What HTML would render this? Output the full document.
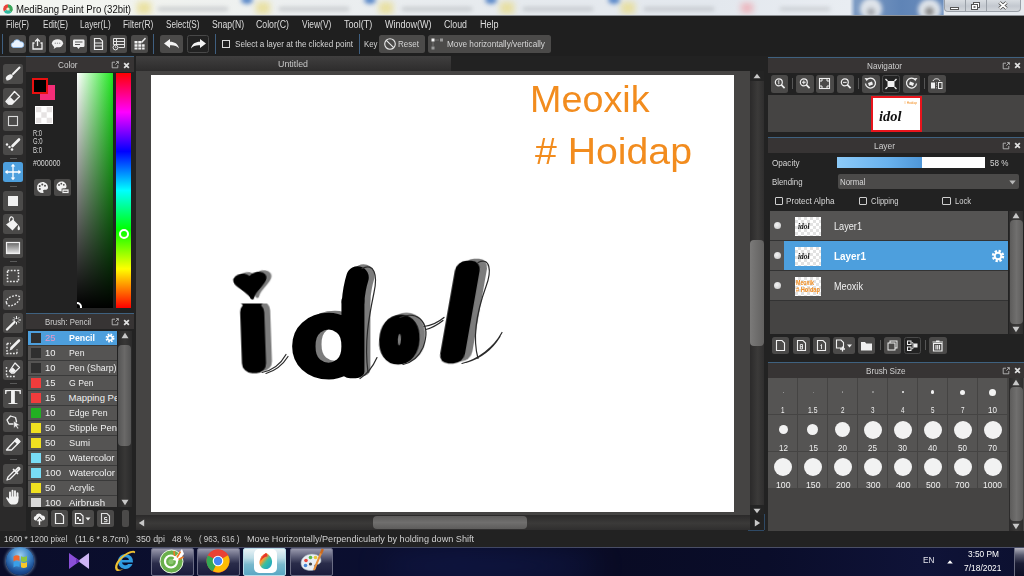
<!DOCTYPE html>
<html><head><meta charset="utf-8"><title>MediBang Paint Pro</title>
<style>
*{box-sizing:border-box;margin:0;padding:0}
html,body{width:1024px;height:576px;overflow:hidden;background:#222;font-family:"Liberation Sans","DejaVu Sans",sans-serif;font-size:9.5px;color:#d6d6d6}
.a{position:absolute}
.t{position:absolute;white-space:pre;display:inline-block;transform-origin:0 50%}
svg{position:absolute;overflow:visible}
#title{left:0;top:0;width:1024px;height:16px;overflow:hidden;background:#eef1f1;color:#111;font-size:10px;line-height:15px}
#menu{left:0;top:16px;width:1024px;height:16px;background:#1f1f1f;font-size:10px;line-height:18.4px;color:#dedede}
#tb{left:0;top:32px;width:1024px;height:24px;background:#1f1f1f;font-size:9.5px;line-height:18px}
.btn{position:absolute;width:17px;height:18px;top:3px;background:#4b4a49;border-radius:2.5px}
.btn.dk{background:#222;border:1px solid #484848}
.vs{position:absolute;width:1px;background:#3f5f80}
#tools{left:0;top:56px;width:26px;height:475px;background:#2b2a2a;box-shadow:inset 0 1px 0 #4a4f55}
.tl{position:absolute;left:3px;width:20px;height:20px;background:#4b4a49;border-radius:2.5px}
.tsep{position:absolute;left:10px;width:7px;height:1px;background:#5a5a5a}
.pn{background:#222}
.hd{position:absolute;left:0;top:0;right:0;height:16px;background:#373434;border-top:1px solid #3f617f;line-height:15px;font-size:9.5px;color:#cfcfcf}
#cv{left:136px;top:56px;width:630px;height:475px;background:#222}
#right{left:768px;top:56px;width:256px;height:475px;background:#454443}
#status{left:0;top:531px;width:1024px;height:16px;background:#222;font-size:9.5px;line-height:16px;color:#cfcfcf}
#task{left:0;top:547px;width:1024px;height:29px;background:#0a0e2a;overflow:hidden}
</style></head><body>
<div class="a" id="title">
 <div class="a" style="left:0;top:0;width:1024px;height:16px;background:linear-gradient(90deg,#f4f6f2 0,#f1f3ef 14%,#eceff0 30%,#e6eaee 50%,#e3e8ee 70%,#e9edf2 83%,#7e9cc4 83.5%,#5f84b6 88%,#6a8dbd 92.1%,#e8ebef 92.2%)"></div>
 <div class="a" style="left:136.5px;top:2px;width:14px;height:12px;background:#e8dc8c;filter:blur(3px);opacity:.8"></div>
 <div class="a" style="left:256px;top:2px;width:14px;height:12px;background:#e8dc8c;filter:blur(3px);opacity:.8"></div>
 <div class="a" style="left:379px;top:2px;width:14px;height:12px;background:#e8dc8c;filter:blur(3px);opacity:.8"></div>
 <div class="a" style="left:500px;top:2px;width:14px;height:12px;background:#e8dc8c;filter:blur(3px);opacity:.8"></div>
 <div class="a" style="left:621px;top:2px;width:14px;height:12px;background:#e8dc8c;filter:blur(3px);opacity:.8"></div>
 <div class="a" style="left:741px;top:3px;width:12px;height:10px;background:#f0a0a8;filter:blur(3px);opacity:.7"></div>
 <div class="a" style="left:158px;top:7px;width:70px;height:4px;background:#b8bcc0;filter:blur(2px);opacity:.7"></div>
 <div class="a" style="left:279px;top:7px;width:70px;height:4px;background:#b8bcc0;filter:blur(2px);opacity:.7"></div>
 <div class="a" style="left:402px;top:7px;width:70px;height:4px;background:#b8bcc0;filter:blur(2px);opacity:.7"></div>
 <div class="a" style="left:523px;top:7px;width:70px;height:4px;background:#b8bcc0;filter:blur(2px);opacity:.7"></div>
 <div class="a" style="left:644px;top:7px;width:70px;height:4px;background:#b8bcc0;filter:blur(2px);opacity:.7"></div>
 <div class="a" style="left:780px;top:7px;width:50px;height:4px;background:#b8bcc0;filter:blur(2px);opacity:.6"></div>
 <div class="a" style="left:241px;top:-4px;width:12px;height:8px;border-radius:50%;background:#5a88c8;filter:blur(2px)"></div>
 <div class="a" style="left:364px;top:-4px;width:12px;height:8px;border-radius:50%;background:#5a88c8;filter:blur(2px)"></div>
 <div class="a" style="left:485px;top:-4px;width:12px;height:8px;border-radius:50%;background:#5a88c8;filter:blur(2px)"></div>
 <div class="a" style="left:608px;top:-4px;width:12px;height:8px;border-radius:50%;background:#5a88c8;filter:blur(2px)"></div>
 
 <div class="a" style="left:860px;top:-2px;width:22px;height:22px;border-radius:50%;background:#dfe4ea;filter:blur(2px)"></div>
 <div class="a" style="left:867px;top:8px;width:8px;height:8px;border-radius:50%;background:#a4a8ae;filter:blur(2px)"></div>
 <div class="a" style="left:918px;top:-1px;width:23px;height:22px;border-radius:50%;background:#dfe4ea;filter:blur(2px)"></div>
 <div class="a" style="left:925px;top:7px;width:9px;height:9px;border-radius:50%;background:#8c8c8c;filter:blur(2px)"></div>
 <div class="a" style="left:944px;top:0;width:77px;height:12px;border-radius:0 0 4px 4px;background:linear-gradient(#d9dde2,#c3c8cf 55%,#d3d7dc);border:1px solid #9aa0a8;border-top:0"></div>
 <div class="a" style="left:965px;top:0;width:1px;height:12px;background:#9aa0a8"></div>
 <div class="a" style="left:986px;top:0;width:1px;height:12px;background:#9aa0a8"></div>
 <div class="a" style="left:944px;top:12px;width:80px;height:4px;background:#e6eaef"></div>
 <div class="a" style="left:950px;top:7px;width:9px;height:3px;background:#fff;border:1px solid #555"></div>
 <svg style="left:970px;top:1px" width="12" height="10" viewBox="0 0 12 10"><rect x="3.5" y="1.5" width="6" height="5" fill="#fff" stroke="#555"/><rect x="1.5" y="3.5" width="6" height="5" fill="#fff" stroke="#555"/><rect x="3.5" y="5.2" width="2" height="1.6" fill="#555"/></svg>
 <svg style="left:998px;top:1px" width="10" height="9" viewBox="0 0 10 9"><path d="M1.5 1.5L8.5 7.5M8.5 1.5L1.5 7.5" stroke="#444" stroke-width="3.4"/><path d="M1.5 1.5L8.5 7.5M8.5 1.5L1.5 7.5" stroke="#fff" stroke-width="1.8"/></svg>
 <div class="a" style="left:0;top:15px;width:1024px;height:1px;background:#8f9296"></div>
 <svg style="left:2px;top:3px" width="12" height="12" viewBox="0 0 12 12"><circle cx="6" cy="6" r="5.3" fill="#fff"/><path d="M6 1.2a4.8 4.8 0 0 0-4.2 7.2L6 6z" fill="#e8433a"/><path d="M1.8 8.4A4.8 4.8 0 0 0 9.6 9.2L6 6z" fill="#2fb8a0"/><path d="M9.6 9.2A4.8 4.8 0 0 0 6 1.2L6 6z" fill="#3aa55a"/><circle cx="6" cy="6" r="1.6" fill="#f5e9c8"/></svg>
 <span class="t" style="transform:scaleX(0.958);left:16px;top:2.2px">MediBang Paint Pro (32bit)</span>
</div>

<div class="a" id="menu">
<span class="t" style="transform:scaleX(0.796);left:6.4px">File(F)</span><span class="t" style="transform:scaleX(0.818);left:42.6px">Edit(E)</span><span class="t" style="transform:scaleX(0.824);left:79.7px">Layer(L)</span><span class="t" style="transform:scaleX(0.839);left:123px">Filter(R)</span><span class="t" style="transform:scaleX(0.815);left:165.6px">Select(S)</span><span class="t" style="transform:scaleX(0.859);left:211.5px">Snap(N)</span><span class="t" style="transform:scaleX(0.873);left:256px">Color(C)</span><span class="t" style="transform:scaleX(0.841);left:302px">View(V)</span><span class="t" style="transform:scaleX(0.909);left:344px">Tool(T)</span><span class="t" style="transform:scaleX(0.902);left:384.7px">Window(W)</span><span class="t" style="transform:scaleX(0.880);left:444.2px">Cloud</span><span class="t" style="transform:scaleX(0.904);left:480px">Help</span>
</div>

<div class="a" id="tb">
 <div class="vs" style="left:2px;top:2px;height:20px"></div>
 <div class="btn" style="left:9px"><svg width="17" height="18" viewBox="0 0 17 18"><path d="M4.2 12.5a2.6 2.6 0 0 1 .3-5.1 3.6 3.6 0 0 1 6.8-.6 2.9 2.9 0 0 1 1.3 5.7z" fill="#e9f3ff" stroke="#8fc0f5" stroke-width=".8"/></svg></div>
 <div class="btn" style="left:29.2px"><svg width="17" height="18" viewBox="0 0 17 18"><path d="M5.5 8H4v6h9V8h-1.5" fill="none" stroke="#f0f0f0" stroke-width="1.3"/><path d="M8.5 11V4.5M6.2 6.5L8.5 4l2.3 2.5" fill="none" stroke="#f0f0f0" stroke-width="1.3"/></svg></div>
 <div class="btn" style="left:49.3px"><svg width="17" height="18" viewBox="0 0 17 18"><ellipse cx="8.5" cy="8.3" rx="5.6" ry="4" fill="#f0f0f0"/><path d="M5.5 11l-.8 3 3.3-2.3z" fill="#f0f0f0"/><circle cx="6.3" cy="8.3" r=".7" fill="#999"/><circle cx="8.5" cy="8.3" r=".7" fill="#999"/><circle cx="10.7" cy="8.3" r=".7" fill="#999"/></svg></div>
 <div class="btn" style="left:69.8px"><svg width="17" height="18" viewBox="0 0 17 18"><rect x="3" y="4.5" width="11.5" height="7.5" rx="1.2" fill="#f0f0f0"/><path d="M7 12l1.5 2 1.5-2z" fill="#f0f0f0"/><path d="M5 7h7.5M5 9.5h5" stroke="#555" stroke-width="1.1"/></svg></div>
 <div class="btn" style="left:90.2px"><svg width="17" height="18" viewBox="0 0 17 18"><path d="M4.5 3.5h5.5l2.5 2.5v8.5h-8z" fill="none" stroke="#f0f0f0" stroke-width="1.2"/><path d="M4.5 8h8M4.5 11h8" stroke="#f0f0f0" stroke-width="1.2"/></svg></div>
 <div class="btn" style="left:110.2px"><svg width="17" height="18" viewBox="0 0 17 18"><path d="M3.5 3.5h11v9h-6M3.5 3.5v6M3.5 6.5h11M3.5 9.5h11M6.5 3.5v6" fill="none" stroke="#e4e4e4" stroke-width="1"/><circle cx="5.5" cy="12.5" r="2.4" fill="#4b4a49" stroke="#e4e4e4" stroke-width="1"/><path d="M5.5 11.3v1.3h1" stroke="#e4e4e4" stroke-width=".8" fill="none"/></svg></div>
 <div class="btn" style="left:130.5px"><svg width="17" height="18" viewBox="0 0 17 18"><path d="M3.5 6h3v2.5h-3zM7.3 6h3v2.5h-3zM3.5 9.3h3v2.5h-3zM7.3 9.3h3v2.5h-3zM11.1 9.3h2.5v2.5h-2.5zM3.5 12.6h3v2h-3zM7.3 12.6h3v2h-3zM11.1 12.6h2.5v2h-2.5z" fill="#f0f0f0"/><path d="M10.5 7.5l3.2-3.5" stroke="#f0f0f0" stroke-width="1.5"/><circle cx="14" cy="3.6" r=".9" fill="#ddd"/></svg></div>
 <div class="vs" style="left:153px;top:2px;height:20px"></div>
 <div class="btn" style="left:159.5px;width:23.5px"><svg width="23" height="18" viewBox="0 0 23 18"><path d="M4 8.5l6-4.5v2.8c4.5 0 8 2 9 6.7-2-2.8-5-3.5-9-3.3v2.8z" fill="#f4f4f4"/></svg></div>
 <div class="btn dk" style="left:186.5px;width:22.5px"><svg width="21" height="16" viewBox="0 0 21 16" style="left:0;top:0"><path d="M18 7.5l-6-4.5v2.8c-4.5 0-8 2-9 6.7 2-2.8 5-3.5 9-3.3v2.8z" fill="#f4f4f4"/></svg></div>
 <div class="vs" style="left:214.5px;top:2px;height:20px"></div>
 <div class="a" style="left:222px;top:8px;width:8px;height:8px;border:1px solid #d8d8d8"></div>
 <span class="t" style="transform:scaleX(0.850);left:234.6px;top:3px">Select a layer at the clicked point</span>
 <div class="vs" style="left:359px;top:2px;height:20px"></div>
 <span class="t" style="transform:scaleX(0.824);left:363.6px;top:3px">Key</span>
 <div class="btn" style="left:379px;width:46px"><svg width="46" height="18" viewBox="0 0 46 18"><circle cx="11" cy="9" r="5.3" fill="none" stroke="#e8e8e8" stroke-width="1.1"/><path d="M7.3 5.3l7.4 7.4" stroke="#e8e8e8" stroke-width="1.1"/></svg><span class="t" style="transform:scaleX(0.846);left:19.4px;top:0">Reset</span></div>
 <div class="btn" style="left:428px;width:122.5px"><svg width="20" height="18" viewBox="0 0 20 18"><rect x="3.5" y="3.5" width="3" height="3" fill="#f4f4f4"/><rect x="12" y="3.5" width="3" height="3" fill="#999"/><rect x="3.5" y="11.5" width="3" height="3" fill="#999"/><path d="M7.5 5h4M5 7.5v3.5" stroke="#aaa" stroke-width=".8" stroke-dasharray="1 1"/></svg><span class="t" style="transform:scaleX(0.863);left:19px;top:0">Move horizontally/vertically</span></div>
</div>

<div class="a" id="tools">
 <div class="tl" style="top:8px"><svg width="20" height="20" viewBox="0 0 20 20"><path d="M16.5 3.5L10 10" stroke="#f2f2f2" stroke-width="2" stroke-linecap="round"/><ellipse cx="6.3" cy="13.3" rx="3.8" ry="2.4" transform="rotate(-35 6.3 13.3)" fill="#f2f2f2"/><path d="M3 16.5c1.5-.2 2.5-1 3-2z" fill="#f2f2f2"/></svg></div>
 <div class="tl" style="top:32px"><svg width="20" height="20" viewBox="0 0 20 20"><path d="M11.5 3.5l5 5-7.5 7.5h-3.5l-2.5-2.5z" fill="none" stroke="#f2f2f2" stroke-width="1.4" stroke-linejoin="round"/><path d="M3.5 13.2l4-4 4.3 4.3-3 3h-3z" fill="#f2f2f2"/></svg></div>
 <div class="tl" style="top:55px"><svg width="20" height="20" viewBox="0 0 20 20"><rect x="5.5" y="5.5" width="9" height="9" fill="none" stroke="#dcdcdc" stroke-width="1.1"/></svg></div>
 <div class="tl" style="top:79px"><svg width="20" height="20" viewBox="0 0 20 20"><path d="M16 4.5L9.5 11" stroke="#f2f2f2" stroke-width="2.6" stroke-linecap="round"/><circle cx="4" cy="9.5" r="1.2" fill="#f2f2f2"/><circle cx="6.5" cy="12" r="1.2" fill="#f2f2f2"/><circle cx="9" cy="14.5" r="1.3" fill="#f2f2f2"/></svg></div>
 <div class="tsep" style="top:101.5px"></div>
 <div class="tl" style="top:106px;background:#4d9fdd"><svg width="20" height="20" viewBox="0 0 20 20"><path d="M10 3v14M3 10h14" stroke="#fff" stroke-width="1.3"/><path d="M10 1.8l2.3 2.8h-4.6zM10 18.2l2.3-2.8h-4.6zM1.8 10l2.8-2.3v4.6zM18.2 10l-2.8-2.3v4.6z" fill="#fff"/></svg></div>
 <div class="tsep" style="top:130px"></div>
 <div class="tl" style="top:134.5px"><svg width="20" height="20" viewBox="0 0 20 20"><rect x="5" y="5" width="10" height="10" fill="#f0f0f0"/></svg></div>
 <div class="tl" style="top:158px"><svg width="20" height="20" viewBox="0 0 20 20"><path d="M3 10.5l7-5 5 5-5.5 6z" fill="#f2f2f2"/><path d="M6.5 7.5c-.5-3 1-5 2.5-4.5s1.5 2.5 1 4.5" fill="none" stroke="#f2f2f2" stroke-width="1.2"/><path d="M15.5 11c1 1.5 1.8 3 1.3 4.5-.5 1-1.8 1-2.1 0-.4-1.5.3-3 .8-4.5z" fill="#f2f2f2"/></svg></div>
 <div class="tl" style="top:181.5px"><svg width="20" height="20" viewBox="0 0 20 20"><defs><linearGradient id="tg" x1="0" y1="0" x2="0" y2="1"><stop offset="0" stop-color="#666"/><stop offset="1" stop-color="#e8e8e8"/></linearGradient></defs><rect x="3.5" y="4.5" width="13" height="11" fill="url(#tg)" stroke="#f0f0f0" stroke-width="1.2"/></svg></div>
 <div class="tsep" style="top:205px"></div>
 <div class="tl" style="top:210px"><svg width="20" height="20" viewBox="0 0 20 20"><rect x="4.5" y="4.5" width="11" height="11" fill="none" stroke="#e6e6e6" stroke-width="1.5" stroke-dasharray="1.8 1.4"/></svg></div>
 <div class="tl" style="top:234px"><svg width="20" height="20" viewBox="0 0 20 20"><path d="M3.5 13c-1-3 2-5.5 5-6.5s7-2 8 .5-2.5 6.5-6 8-6 1-7-2z" fill="none" stroke="#e6e6e6" stroke-width="1.4" stroke-dasharray="1.8 1.4"/></svg></div>
 <div class="tl" style="top:257px"><svg width="20" height="20" viewBox="0 0 20 20"><path d="M4 16.5L11.5 9" stroke="#f2f2f2" stroke-width="2.4" stroke-linecap="round"/><path d="M13.5 3v3M13.5 9v2.5M9.5 7h2.5M15.5 7h2.5M10.8 4.3l1.5 1.5M16.2 4.3l-1.5 1.5M16.2 9.7l-1.5-1.5" stroke="#f2f2f2" stroke-width="1"/></svg></div>
 <div class="tl" style="top:280.5px"><svg width="20" height="20" viewBox="0 0 20 20"><path d="M4 6.5v10h10" fill="none" stroke="#e6e6e6" stroke-width="1.4" stroke-dasharray="1.8 1.4"/><path d="M4 6.5h4M14 16.5v-4" fill="none" stroke="#e6e6e6" stroke-width="1.4" stroke-dasharray="1.8 1.4"/><path d="M16 3.5L8.5 11" stroke="#f2f2f2" stroke-width="2.5" stroke-linecap="round"/><path d="M7.8 10.5l-1.3 3 3-1.3z" fill="#f2f2f2"/></svg></div>
 <div class="tl" style="top:304px"><svg width="20" height="20" viewBox="0 0 20 20"><path d="M3.5 7v9.5h9" fill="none" stroke="#e6e6e6" stroke-width="1.4" stroke-dasharray="1.8 1.4"/><path d="M12 3l4.5 4.5-5.5 5.5h-2.5l-2-2z" fill="none" stroke="#f2f2f2" stroke-width="1.3" stroke-linejoin="round"/><path d="M6.8 10.5l3-3 3 3-2 2h-2.3z" fill="#f2f2f2"/></svg></div>
 <div class="tsep" style="top:327px"></div>
 <div class="tl" style="top:332px"><span class="a" style="left:0;top:-3px;width:20px;text-align:center;font:bold 22px/24px 'Liberation Serif',serif;color:#f2f2f2;transform:scaleX(1.12)">T</span></div>
 <div class="tl" style="top:355.5px"><svg width="20" height="20" viewBox="0 0 20 20"><path d="M4 8l3.5-4 5 1.5 1 4-2 2.5h-5.5z" fill="none" stroke="#f0f0f0" stroke-width="1.3" stroke-linejoin="round"/><path d="M10.5 9l6.5 4.2-2.8.5 1.5 2.6-1.3.7-1.5-2.6-2 1.8z" fill="#f2f2f2" stroke="#4b4a49" stroke-width=".6"/></svg></div>
 <div class="tl" style="top:379px"><svg width="20" height="20" viewBox="0 0 20 20"><path d="M14 3.5l3 3-8.5 8.5h-5l2-2.5z" fill="none" stroke="#f2f2f2" stroke-width="1.3" stroke-linejoin="round"/><path d="M11 6l3.5 3.5 2.7-2.7-3.3-3.5z" fill="#f2f2f2"/></svg></div>
 <div class="tsep" style="top:402.5px"></div>
 <div class="tl" style="top:407.5px"><svg width="20" height="20" viewBox="0 0 20 20"><path d="M4 16l1-3 6.5-6.5 2 2L7 15z" fill="none" stroke="#f2f2f2" stroke-width="1.3" stroke-linejoin="round"/><path d="M10.5 5.5l4 4M12.5 6.5l2.3-2.5c1-1 2.5.5 1.5 1.5l-2.5 2.3" stroke="#f2f2f2" stroke-width="1.7" fill="none" stroke-linecap="round"/></svg></div>
 <div class="tl" style="top:430.5px"><svg width="20" height="20" viewBox="0 0 20 20"><path d="M7 10.5V5.5M9.5 10V3.8M12 10V4.3M14.5 11V6.2" stroke="#f2f2f2" stroke-width="1.9" stroke-linecap="round" fill="none"/><path d="M6.050 9.5h9.4v3.5c0 2.5-1.5 4.5-4 4.5h-2c-1.8 0-2.8-.8-3.8-2.3l-2.4-3.6c-.6-1 .7-1.9 1.5-1l1.3 1.5z" fill="#f2f2f2"/></svg></div>
</div>

<div class="a pn" id="color" style="left:26px;top:56px;width:109.5px;height:256px">
 <div class="hd" style="width:107.5px"><span class="t" style="transform:scaleX(0.859);left:32.3px;top:0">Color</span>
  <svg style="left:84.5px;top:4.2px" width="8" height="8" viewBox="0 0 10 10"><path d="M5 1.5H1.5v7h7V5" fill="none" stroke="#c8c8c8" stroke-width="1"/><path d="M5.5 4.5L9 1M6.5 .8h2.7v2.7" fill="none" stroke="#c8c8c8" stroke-width="1"/></svg>
  <svg style="left:97.0px;top:4.7px" width="7" height="7" viewBox="0 0 9 9"><path d="M1.5 1.5l6 6M7.5 1.5l-6 6" stroke="#e0e0e0" stroke-width="2.300"/></svg>
 </div>
 <div class="a" style="left:14px;top:29px;width:14.5px;height:15px;background:#f52d78"></div>
 <div class="a" style="left:6px;top:22px;width:16px;height:15.5px;background:#000;border:2px solid #e81010"></div>
 <div class="a" style="left:9px;top:50px;width:17.5px;height:17.5px;background:#fff"><svg width="18" height="18" viewBox="0 0 18 18"><path d="M1 1h5.3v5.3H1zM11.7 1H17v5.3h-5.3zM6.3 6.3h5.4v5.4H6.3zM1 11.7h5.3V17H1zM11.7 11.7H17V17h-5.3z" fill="#e6e3e3"/></svg></div>
 <span class="t" style="transform:scaleX(0.680);left:7px;top:71.5px;font-size:8.5px">R:0</span>
 <span class="t" style="transform:scaleX(0.693);left:7px;top:80px;font-size:8.5px">G:0</span>
 <span class="t" style="transform:scaleX(0.705);left:7px;top:88.5px;font-size:8.5px">B:0</span>
 <span class="t" style="transform:scaleX(0.831);left:7px;top:102px;font-size:8.5px">#000000</span>
 <div class="a" style="left:7.5px;top:122.5px;width:17px;height:17px;background:#4b4a49;border-radius:2.5px"><svg width="17" height="17" viewBox="0 0 17 17"><path d="M8.5 3a5.5 5.5 0 1 0 0 11c1.3 0 1.3-1 .8-1.6-.6-.8 0-1.7 1-1.7H12c1.3 0 2-1 2-2.2C14 5.3 11.5 3 8.5 3z" fill="#f2f2f2"/><circle cx="5.7" cy="7" r="1" fill="#4b4a49"/><circle cx="8.3" cy="5.5" r="1" fill="#4b4a49"/><circle cx="11" cy="6.8" r="1" fill="#4b4a49"/><circle cx="5.8" cy="10" r="1" fill="#4b4a49"/></svg></div>
 <div class="a" style="left:28px;top:122.5px;width:17px;height:17px;background:#4b4a49;border-radius:2.5px"><svg width="17" height="17" viewBox="0 0 17 17"><path d="M7.5 2.5a5 5 0 1 0 0 10c1.2 0 1.2-.9.7-1.5-.5-.7 0-1.5.9-1.5h1.5c1.2 0 1.9-.9 1.9-2C12.5 4.5 10.3 2.5 7.5 2.5z" fill="#f2f2f2"/><circle cx="5" cy="6" r=".9" fill="#4b4a49"/><circle cx="7.3" cy="4.7" r=".9" fill="#4b4a49"/><circle cx="9.8" cy="5.8" r=".9" fill="#4b4a49"/><rect x="8" y="10" width="7" height="4.5" fill="#f2f2f2" stroke="#4b4a49" stroke-width=".8"/><path d="M9.5 12.3h4" stroke="#4b4a49" stroke-width="1"/></svg></div>
 <div class="a" style="left:51px;top:17px;width:36px;height:234.5px;background:linear-gradient(to bottom,rgba(0,0,0,0),#000),linear-gradient(to right,#fff,#1fe81f)"></div>
 <div class="a" style="left:89.8px;top:17px;width:15.5px;height:234.5px;background:linear-gradient(to bottom,#ff0000 0,#ff00ff 16.67%,#0000ff 33.33%,#00ffff 50%,#00ff00 66.67%,#ffff00 83.33%,#ff0000 100%)"></div>
 <div class="a" style="left:92.5px;top:173px;width:10px;height:10px;border:2.2px solid #fff;border-radius:50%"></div>
 <div class="a" style="left:51px;top:17px;width:36px;height:234.5px;overflow:hidden"><div class="a" style="left:-5px;top:229px;width:10px;height:10px;border:2px solid #fff;border-radius:50%"></div></div>
</div>

<div class="a pn" id="brush" style="left:26px;top:312px;width:109.5px;height:219px">
 <div class="hd" style="top:1px;width:107.5px"><span class="t" style="transform:scaleX(0.822);left:19px;top:0">Brush: Pencil</span>
  <svg style="left:84.5px;top:4.2px" width="8" height="8" viewBox="0 0 10 10"><path d="M5 1.5H1.5v7h7V5" fill="none" stroke="#c8c8c8" stroke-width="1"/><path d="M5.5 4.5L9 1M6.5 .8h2.7v2.7" fill="none" stroke="#c8c8c8" stroke-width="1"/></svg>
  <svg style="left:97.0px;top:4.7px" width="7" height="7" viewBox="0 0 9 9"><path d="M1.5 1.5l6 6M7.5 1.5l-6 6" stroke="#e0e0e0" stroke-width="2.300"/></svg>
 </div>
 <div class="a" style="left:2px;top:18.5px;width:88.5px;height:176px;overflow:hidden;background:#555453;font-size:9.5px;line-height:14px">
  <div class="a" style="left:0;top:0px;width:88.5px;height:15px;background:#4d9fdd;border-bottom:1px solid #3a3a3a">
   <div class="a" style="left:2.5px;top:2.5px;width:10px;height:9.5px;background:#2f2f2f"></div>
   <span class="t" style="transform:scaleX(0.993);left:17px;top:0;color:#e898c8">25</span>
   <span class="t" style="transform:scaleX(0.929);left:40.5px;top:0;font-weight:bold;color:#fff">Pencil</span>
   <svg style="left:76.5px;top:2.5px" width="10" height="10" viewBox="0 0 10 10"><circle cx="5" cy="5" r="3.3" fill="none" stroke="#fff" stroke-width="2.4" stroke-dasharray="1.5 1.1"/><circle cx="5" cy="5" r="2.3" fill="none" stroke="#fff" stroke-width="1.4"/></svg>
  </div>
  <div class="a" style="left:0;top:15px;width:88.5px;height:15px;background:#555453;border-bottom:1px solid #3a3a3a">
   <div class="a" style="left:2.5px;top:2.5px;width:10px;height:9.5px;background:#2f2f2f"></div>
   <span class="t" style="transform:scaleX(0.993);left:17px;top:0;color:#f0f0f0">10</span>
   <span class="t" style="transform:scaleX(0.917);left:40.5px;top:0;color:#f0f0f0">Pen</span>
  </div>
  <div class="a" style="left:0;top:30px;width:88.5px;height:15px;background:#555453;border-bottom:1px solid #3a3a3a">
   <div class="a" style="left:2.5px;top:2.5px;width:10px;height:9.5px;background:#2f2f2f"></div>
   <span class="t" style="transform:scaleX(0.993);left:17px;top:0;color:#f0f0f0">10</span>
   <span class="t" style="transform:scaleX(0.927);left:40.5px;top:0;color:#f0f0f0">Pen (Sharp)</span>
  </div>
  <div class="a" style="left:0;top:45px;width:88.5px;height:15px;background:#555453;border-bottom:1px solid #3a3a3a">
   <div class="a" style="left:2.5px;top:2.5px;width:10px;height:9.5px;background:#f03c3c"></div>
   <span class="t" style="transform:scaleX(0.993);left:17px;top:0;color:#f0f0f0">15</span>
   <span class="t" style="transform:scaleX(0.910);left:40.5px;top:0;color:#f0f0f0">G Pen</span>
  </div>
  <div class="a" style="left:0;top:60px;width:88.5px;height:15px;background:#555453;border-bottom:1px solid #3a3a3a">
   <div class="a" style="left:2.5px;top:2.5px;width:10px;height:9.5px;background:#f03c3c"></div>
   <span class="t" style="transform:scaleX(0.993);left:17px;top:0;color:#f0f0f0">15</span>
   <span class="t" style="transform:scaleX(1.000);left:40.5px;top:0;color:#f0f0f0">Mapping Pen</span>
  </div>
  <div class="a" style="left:0;top:75px;width:88.5px;height:15px;background:#555453;border-bottom:1px solid #3a3a3a">
   <div class="a" style="left:2.5px;top:2.5px;width:10px;height:9.5px;background:#22b022"></div>
   <span class="t" style="transform:scaleX(0.993);left:17px;top:0;color:#f0f0f0">10</span>
   <span class="t" style="transform:scaleX(0.923);left:40.5px;top:0;color:#f0f0f0">Edge Pen</span>
  </div>
  <div class="a" style="left:0;top:90px;width:88.5px;height:15px;background:#555453;border-bottom:1px solid #3a3a3a">
   <div class="a" style="left:2.5px;top:2.5px;width:10px;height:9.5px;background:#f0e020"></div>
   <span class="t" style="transform:scaleX(0.993);left:17px;top:0;color:#f0f0f0">50</span>
   <span class="t" style="transform:scaleX(0.988);left:40.5px;top:0;color:#f0f0f0">Stipple Pen</span>
  </div>
  <div class="a" style="left:0;top:105px;width:88.5px;height:15px;background:#555453;border-bottom:1px solid #3a3a3a">
   <div class="a" style="left:2.5px;top:2.5px;width:10px;height:9.5px;background:#f0e020"></div>
   <span class="t" style="transform:scaleX(0.993);left:17px;top:0;color:#f0f0f0">50</span>
   <span class="t" style="transform:scaleX(0.970);left:40.5px;top:0;color:#f0f0f0">Sumi</span>
  </div>
  <div class="a" style="left:0;top:120px;width:88.5px;height:15px;background:#555453;border-bottom:1px solid #3a3a3a">
   <div class="a" style="left:2.5px;top:2.5px;width:10px;height:9.5px;background:#78dcf5"></div>
   <span class="t" style="transform:scaleX(0.993);left:17px;top:0;color:#f0f0f0">50</span>
   <span class="t" style="transform:scaleX(0.998);left:40.5px;top:0;color:#f0f0f0">Watercolor</span>
  </div>
  <div class="a" style="left:0;top:135px;width:88.5px;height:15px;background:#555453;border-bottom:1px solid #3a3a3a">
   <div class="a" style="left:2.5px;top:2.5px;width:10px;height:9.5px;background:#78dcf5"></div>
   <span class="t" style="transform:scaleX(1.009);left:17px;top:0;color:#f0f0f0">100</span>
   <span class="t" style="transform:scaleX(1.010);left:40.5px;top:0;color:#f0f0f0">Watercolor (Wet)</span>
  </div>
  <div class="a" style="left:0;top:150px;width:88.5px;height:15px;background:#555453;border-bottom:1px solid #3a3a3a">
   <div class="a" style="left:2.5px;top:2.5px;width:10px;height:9.5px;background:#f0e020"></div>
   <span class="t" style="transform:scaleX(0.993);left:17px;top:0;color:#f0f0f0">50</span>
   <span class="t" style="transform:scaleX(0.911);left:40.5px;top:0;color:#f0f0f0">Acrylic</span>
  </div>
  <div class="a" style="left:0;top:165px;width:88.5px;height:15px;background:#555453;border-bottom:1px solid #3a3a3a">
   <div class="a" style="left:2.5px;top:2.5px;width:10px;height:9.5px;background:#d8d8d8"></div>
   <span class="t" style="transform:scaleX(1.009);left:17px;top:0;color:#f0f0f0">100</span>
   <span class="t" style="transform:scaleX(1.018);left:40.5px;top:0;color:#f0f0f0">Airbrush</span>
  </div>
 </div>
 <div class="a" style="left:91.5px;top:18.5px;width:14px;height:176px;background:linear-gradient(90deg,#2a2a2a,#383736 50%,#2a2a2a)"></div>
 <div class="a" style="left:92px;top:33px;width:12.5px;height:101px;border-radius:4px;background:linear-gradient(90deg,#555,#6a6968 50%,#555)"></div>
 <svg style="left:94.5px;top:19.5px" width="8" height="7" viewBox="0 0 8 7"><path d="M4 .8L7.5 6.2H.5z" fill="#c8c8c8"/></svg>
 <svg style="left:94.5px;top:186.5px" width="8" height="7" viewBox="0 0 8 7"><path d="M4 6.2L7.5 .8H.5z" fill="#c8c8c8"/></svg>
 <div class="a" style="left:5px;top:197.5px;width:17px;height:17px;background:#4b4a49;border-radius:2.5px"><svg width="17" height="17" viewBox="0 0 17 17"><path d="M4.5 10.5a2.3 2.3 0 0 1 .2-4.5 3.3 3.3 0 0 1 6.3-.4 2.5 2.5 0 0 1 1 4.9z" fill="#f2f2f2"/><path d="M8.5 14.5V9M6.3 11L8.5 8.5 10.7 11" stroke="#4b4a49" stroke-width="2.6" fill="none"/><path d="M8.5 15V9.5M6.5 11.3L8.5 9l2 2.3" stroke="#f2f2f2" stroke-width="1.4" fill="none"/></svg></div>
 <div class="a" style="left:25px;top:197.5px;width:17px;height:17px;background:#4b4a49;border-radius:2.5px"><svg width="17" height="17" viewBox="0 0 17 17"><path d="M4.5 3.5h5.5l2.5 2.5v7.5h-8z" fill="none" stroke="#f0f0f0" stroke-width="1.2"/></svg></div>
 <div class="a" style="left:45.5px;top:197.5px;width:22px;height:17px;background:#4b4a49;border-radius:2.5px"><svg width="22" height="17" viewBox="0 0 22 17"><path d="M3.5 3.5h5l2.5 2.5v7.5h-7.5z" fill="none" stroke="#f0f0f0" stroke-width="1.2"/><rect x="5" y="7" width="2" height="2" fill="#f0f0f0"/><rect x="7" y="9" width="2" height="2" fill="#f0f0f0"/><path d="M13.5 7.5h5l-2.5 3z" fill="#f0f0f0"/></svg></div>
 <div class="a" style="left:71px;top:197.5px;width:17px;height:17px;background:#4b4a49;border-radius:2.5px"><svg width="17" height="17" viewBox="0 0 17 17"><path d="M4.5 3.5h5.5l2.5 2.5v7.5h-8z" fill="none" stroke="#e0e0e0" stroke-width="1.1"/><path d="M10 7.5H7.5v2H10v2.2H7" fill="none" stroke="#e0e0e0" stroke-width="1"/></svg></div>
 <div class="a" style="left:96px;top:197.5px;width:7px;height:17px;background:#4b4a49;border-radius:2px"></div>
</div>

<div class="a" id="cv" style="left:135.5px;top:56px;width:631px;height:475px;background:#222">
 <div class="a" style="left:0;top:0;width:315.5px;height:15.5px;background:linear-gradient(#403f3f,#2c2b2b)"><span class="t" style="transform:scaleX(0.931);left:142.5px;top:1px;line-height:14px;color:#c8c8c8">Untitled</span></div>
 <div class="a" style="left:0;top:15px;width:614px;height:444px;background:#454443"></div>
 <div class="a" style="left:15.5px;top:18.5px;width:583px;height:437.5px;background:#fff;overflow:hidden">
  <span class="t" style="transform:scaleX(1.048);left:378.5px;top:4.5px;font-size:36px;line-height:42px;color:#f28c1e">Meoxik</span>
  <span class="t" style="transform:scaleX(1.089);left:383.5px;top:56.5px;font-size:36px;line-height:42px;color:#f28c1e"># Hoidap</span>
  <svg style="left:0;top:0" width="583" height="437.5" viewBox="151 74.5 583 437.5"><g font-family="'DejaVu Sans',sans-serif" font-weight="200" fill="#000" stroke="#000" stroke-linejoin="round" stroke-linecap="round"><text transform="translate(241.6,363) skewX(2)" font-size="92" stroke-width="20" style="filter:drop-shadow(6px -2px 0 #7c7c7c)">i</text><rect x="226" y="250" width="62" height="53" fill="#fff" stroke="none"/><g style="filter:drop-shadow(6.5px -1.5px 0 #7c7c7c)"><text transform="translate(291,371) scale(1.35,1)" font-size="92" stroke-width="13">d</text><path d="M353 302q1-14 4.5-25" fill="none" stroke-width="22.5"/></g><text transform="translate(382.2,354.6) skewX(-3) scale(.950,1)" font-size="56.3" stroke-width="17" style="filter:drop-shadow(6px -1.5px 0 #7c7c7c)">o</text><text transform="translate(438,353) skewX(-10)" font-size="108" stroke-width="20" style="filter:drop-shadow(7px -2px 0 #7c7c7c)">l</text><text transform="translate(232.5,297.5) rotate(-7 18 -13) scale(1.3,.920)" font-family="'Liberation Serif',serif" font-weight="bold" font-size="47" stroke-width="2.5" style="filter:drop-shadow(4px -1px 0 #7c7c7c)">♥</text></g><g fill="none" stroke="#2a2a2a" stroke-width="1.2" stroke-linecap="round"><path d="M262 372c10-2 19-9 24-18M266 373c10-3 17-9 22-17"/><path d="M360 378c8-5 13-12 17-21"/><path d="M400 317c18-8 32 6 23 30-4 9-11 15-20 17M424 326c8-1 14-4 20-9M426 329c7-2 12-5 17-9"/><path d="M462 363c16-4 32-16 40-31M466 362c14-4 26-13 34-26"/><path d="M362 268c12-6 16 6 12 24-5 24-10 50-6 80"/><path d="M478 262c12-6 14 8 8 24-8 22-14 50-8 72"/></g></svg>

 </div>
 <div class="a" style="left:614px;top:15px;width:14px;height:444px;background:linear-gradient(90deg,#2b2a2a,#3b3a39 55%,#2f2e2e)"></div>
 <div class="a" style="left:614px;top:184px;width:14px;height:106px;border-radius:4px;background:linear-gradient(90deg,#7b7a79,#6d6c6b 55%,#626160)"></div>
 <div class="a" style="left:614px;top:15px;width:14px;height:9.5px;background:#242424"></div><svg style="left:617px;top:16.5px" width="8" height="6" viewBox="0 0 8 7" preserveAspectRatio="none"><path d="M4 .8L7.5 6.2H.5z" fill="#c8c8c8"/></svg>
 <div class="a" style="left:614px;top:448.5px;width:14px;height:10px;background:#242424"></div><svg style="left:617px;top:451.5px" width="8" height="6" viewBox="0 0 8 7" preserveAspectRatio="none"><path d="M4 6.2L7.5 .8H.5z" fill="#c8c8c8"/></svg>
 <div class="a" style="left:0;top:459px;width:614px;height:14.5px;background:linear-gradient(#2b2a2a,#3b3a39 55%,#2f2e2e)"></div>
 <div class="a" style="left:237.5px;top:459.5px;width:154px;height:13.5px;border-radius:4px;background:linear-gradient(#5d5c5b,#706f6e 50%,#5d5c5b)"></div>
 <svg style="left:2px;top:462.5px" width="7" height="8" viewBox="0 0 7 8"><path d="M.8 4L6.2 .5v7z" fill="#c8c8c8"/></svg>
 <svg style="left:618.5px;top:462.5px" width="7" height="8" viewBox="0 0 7 8"><path d="M6.2 4L.8 .5v7z" fill="#c8c8c8"/></svg>
 <div class="a" style="left:612px;top:473.5px;width:16.5px;height:1px;background:#2f4a66"></div>
 <div class="a" style="left:628px;top:458px;width:1px;height:16px;background:#2f4a66"></div>
</div>

<div class="a" id="right" style="left:768px;top:56px;width:256px;height:475px;background:#222">
 <div class="hd" style="top:.5px"><span class="t" style="transform:scaleX(0.861);left:98.5px;top:0">Navigator</span><svg style="left:233.5px;top:4.2px" width="8" height="8" viewBox="0 0 10 10"><path d="M5 1.5H1.5v7h7V5" fill="none" stroke="#c8c8c8" stroke-width="1"/><path d="M5.5 4.5L9 1M6.5 .8h2.7v2.7" fill="none" stroke="#c8c8c8" stroke-width="1"/></svg><svg style="left:246.0px;top:4.7px" width="7" height="7" viewBox="0 0 9 9"><path d="M1.5 1.5l6 6M7.5 1.5l-6 6" stroke="#e0e0e0" stroke-width="2.300"/></svg></div>
 <div class="a" style="left:0;top:16.5px;width:256px;height:22px;background:#222"></div>
 <div class="a" style="left:2.5px;top:19px;width:17.5px;height:17.5px;border-radius:2.5px;background:#4b4a49"><svg width="17" height="17" viewBox="-1 -.5 18.5 18.5"><circle cx="7.5" cy="7.5" r="3.8" fill="none" stroke="#f0f0f0" stroke-width="1.3"/><path d="M10.3 10.3l3.5 3.5" stroke="#f0f0f0" stroke-width="1.8"/><path d="M7.5 5.5v4M6.7 6.3l.8-.8" stroke="#f0f0f0" stroke-width="1" fill="none"/></svg></div>
 <div class="a" style="left:24px;top:22px;width:1px;height:11px;background:#555"></div>
 <div class="a" style="left:28px;top:19px;width:17.5px;height:17.5px;border-radius:2.5px;background:#4b4a49"><svg width="17" height="17" viewBox="-1 -.5 18.5 18.5"><circle cx="7.5" cy="7.5" r="3.8" fill="none" stroke="#f0f0f0" stroke-width="1.3"/><path d="M10.3 10.3l3.5 3.5" stroke="#f0f0f0" stroke-width="1.8"/><path d="M5.5 7.5h4M7.5 5.5v4" stroke="#f0f0f0" stroke-width="1.1"/></svg></div>
 <div class="a" style="left:48.2px;top:19px;width:17.5px;height:17.5px;border-radius:2.5px;background:#4b4a49"><svg width="17" height="17" viewBox="0 0 17 17"><rect x="3.5" y="3.5" width="10" height="10" fill="none" stroke="#f0f0f0" stroke-width="1.1"/><path d="M5 7V5h2M10 5h2v2M12 10v2h-2M7 12H5v-2" fill="none" stroke="#f0f0f0" stroke-width="1"/></svg></div>
 <div class="a" style="left:68.7px;top:19px;width:17.5px;height:17.5px;border-radius:2.5px;background:#4b4a49"><svg width="17" height="17" viewBox="-1 -.5 18.5 18.5"><circle cx="7.5" cy="7.5" r="3.8" fill="none" stroke="#f0f0f0" stroke-width="1.3"/><path d="M10.3 10.3l3.5 3.5" stroke="#f0f0f0" stroke-width="1.8"/><path d="M5.5 7.5h4" stroke="#f0f0f0" stroke-width="1.1"/></svg></div>
 <div class="a" style="left:89.5px;top:22px;width:1px;height:11px;background:#555"></div>
 <div class="a" style="left:94px;top:19px;width:17.5px;height:17.5px;border-radius:2.5px;background:#4b4a49"><svg width="17" height="17" viewBox="0 0 17 17" ><path d="M4.5 5a5 5 0 1 1-1 3.5" fill="none" stroke="#f0f0f0" stroke-width="1.3"/><path d="M2.5 3l3 .3-.6 3z" fill="#f0f0f0"/><path d="M6 8l4-1.5 1 3-4 1.5z" fill="#f0f0f0"/></svg></div>
 <div class="a" style="left:114.3px;top:19px;width:17.5px;height:17.5px;border-radius:2.5px;background:#222;border:1px solid #4a4a4a"><svg width="16" height="16" viewBox="0 0 16 16" style="left:0;top:0"><rect x="4.5" y="5" width="7" height="6" fill="#f0f0f0"/><path d="M2.5 3l2 2M13.5 3l-2 2M2.5 13l2-2M13.5 13l-2-2" stroke="#f0f0f0" stroke-width="1.3"/></svg></div>
 <div class="a" style="left:134.7px;top:19px;width:17.5px;height:17.5px;border-radius:2.5px;background:#4b4a49"><svg width="17" height="17" viewBox="0 0 17 17" transform="scale(-1,1)" style="transform:scaleX(-1)"><path d="M4.5 5a5 5 0 1 1-1 3.5" fill="none" stroke="#f0f0f0" stroke-width="1.3"/><path d="M2.5 3l3 .3-.6 3z" fill="#f0f0f0"/><path d="M6 8l4-1.5 1 3-4 1.5z" fill="#f0f0f0"/></svg></div>
 <div class="a" style="left:155.5px;top:22px;width:1px;height:11px;background:#555"></div>
 <div class="a" style="left:160px;top:19px;width:17.5px;height:17.5px;border-radius:2.5px;background:#4b4a49"><svg width="17" height="17" viewBox="0 0 17 17"><rect x="3" y="7.5" width="4" height="6" fill="#f0f0f0"/><rect x="10.5" y="7.5" width="3.5" height="6" fill="none" stroke="#f0f0f0" stroke-width="1"/><path d="M8.5 7v7" stroke="#aaa" stroke-width=".8" stroke-dasharray="1.5 1"/><path d="M5 6c1-3 6-3 7 0" fill="none" stroke="#f0f0f0" stroke-width="1"/></svg></div>
 <div class="a" style="left:0;top:38.5px;width:256px;height:37.5px;background:#454443"></div>
 <div class="a" style="left:103px;top:40px;width:51px;height:35.5px;background:#fff;border:2px solid #e8141c;overflow:hidden;line-height:1"><span class="t" style="transform:scaleX(1.033);left:5.5px;top:11px;font:italic bold 14px/16px 'Liberation Serif',serif;color:#111">idol</span><span class="t" style="transform:scaleX(1.082);left:31px;top:2.5px;font-size:3px;line-height:4px;color:#f28c1e"># Hoidap</span></div>
 <div class="hd" style="top:80.5px"><span class="t" style="transform:scaleX(0.884);left:105.5px;top:0">Layer</span><svg style="left:233.5px;top:4.2px" width="8" height="8" viewBox="0 0 10 10"><path d="M5 1.5H1.5v7h7V5" fill="none" stroke="#c8c8c8" stroke-width="1"/><path d="M5.5 4.5L9 1M6.5 .8h2.7v2.7" fill="none" stroke="#c8c8c8" stroke-width="1"/></svg><svg style="left:246.0px;top:4.7px" width="7" height="7" viewBox="0 0 9 9"><path d="M1.5 1.5l6 6M7.5 1.5l-6 6" stroke="#e0e0e0" stroke-width="2.300"/></svg></div>
 <span class="t" style="transform:scaleX(0.854);left:3.7px;top:101px;line-height:12px">Opacity</span>
 <div class="a" style="left:69px;top:100.5px;width:147.5px;height:11px;background:#fff"><div class="a" style="left:0;top:0;width:85px;height:11px;background:linear-gradient(90deg,#8ccaf8,#69b2ee 60%,#4f97d8)"></div></div>
 <span class="t" style="transform:scaleX(0.854);left:222px;top:101px;line-height:12px">58 %</span>
 <span class="t" style="transform:scaleX(0.825);left:3.7px;top:119.5px;line-height:12px">Blending</span>
 <div class="a" style="left:69.5px;top:118px;width:181.5px;height:15px;background:#4b4a49;border-radius:2px"><span class="t" style="transform:scaleX(0.833);left:2.5px;top:1.5px;line-height:12px">Normal</span><svg style="left:171.5px;top:5.5px" width="7" height="5" viewBox="0 0 7 5"><path d="M.3 .5h6.4L3.5 4.5z" fill="#b8b8b8"/></svg></div>
 <div class="a" style="left:6.5px;top:140.5px;width:8.5px;height:8.5px;border:1px solid #cfcfcf;border-radius:1px"></div>
 <span class="t" style="transform:scaleX(0.858);left:18.4px;top:139px;line-height:12px">Protect Alpha</span>
 <div class="a" style="left:90.7px;top:140.5px;width:8.5px;height:8.5px;border:1px solid #cfcfcf;border-radius:1px"></div>
 <span class="t" style="transform:scaleX(0.801);left:102.6px;top:139px;line-height:12px">Clipping</span>
 <div class="a" style="left:174px;top:140.5px;width:8.5px;height:8.5px;border:1px solid #cfcfcf;border-radius:1px"></div>
 <span class="t" style="transform:scaleX(0.797);left:186.5px;top:139px;line-height:12px">Lock</span>
 <div class="a" style="left:1.5px;top:155px;width:238.5px;height:122.5px;background:#454443"></div>
 <div class="a" style="left:1.5px;top:155px;width:238.5px;height:30px;background:#555453;border-bottom:1px solid #333"></div>
 <div class="a" style="left:5.5px;top:166px;width:7px;height:7px;border-radius:50%;background:radial-gradient(circle at 40% 40%,#f4f4f4,#c4c4c4)"></div>
 <div class="a" style="left:27px;top:161px;width:26px;height:18.5px;overflow:hidden;background-color:#fff;background-image:linear-gradient(45deg,#e2e2e2 25%,transparent 25%,transparent 75%,#e2e2e2 75%),linear-gradient(45deg,#e2e2e2 25%,transparent 25%,transparent 75%,#e2e2e2 75%);background-size:6px 6px;background-position:0 0,3px 3px"><span class="t" style="transform:scaleX(0.923);left:3.4px;top:5px;font:italic bold 8px/9px 'Liberation Serif',serif;color:#111">idol</span></div>
 <span class="t" style="transform:scaleX(0.916);left:65.7px;top:164px;font-size:10px;line-height:14px;color:#f0f0f0">Layer1</span>
 <div class="a" style="left:1.5px;top:185px;width:238.5px;height:30px;background:#555453;border-bottom:1px solid #333"></div>
 <div class="a" style="left:16px;top:185px;width:224px;height:29px;background:#4d9fdd"></div>
 <svg style="left:222.5px;top:192.5px" width="14" height="14" viewBox="0 0 14 14"><circle cx="7" cy="7" r="4.6" fill="none" stroke="#fff" stroke-width="3.2" stroke-dasharray="2.1 1.510"/><circle cx="7" cy="7" r="3.3" fill="none" stroke="#fff" stroke-width="2"/></svg>
 <div class="a" style="left:5.5px;top:196px;width:7px;height:7px;border-radius:50%;background:radial-gradient(circle at 40% 40%,#f4f4f4,#c4c4c4)"></div>
 <div class="a" style="left:27px;top:191px;width:26px;height:18.5px;overflow:hidden;background-color:#fff;background-image:linear-gradient(45deg,#e2e2e2 25%,transparent 25%,transparent 75%,#e2e2e2 75%),linear-gradient(45deg,#e2e2e2 25%,transparent 25%,transparent 75%,#e2e2e2 75%);background-size:6px 6px;background-position:0 0,3px 3px"><span class="t" style="transform:scaleX(0.923);left:3.4px;top:5px;font:italic bold 8px/9px 'Liberation Serif',serif;color:#111">idol</span></div>
 <span class="t" style="transform:scaleX(0.992);left:65.7px;top:194px;font-size:10px;line-height:14px;font-weight:bold;color:#fff">Layer1</span>
 <div class="a" style="left:1.5px;top:215px;width:238.5px;height:30px;background:#555453;border-bottom:1px solid #333"></div>
 <div class="a" style="left:5.5px;top:226px;width:7px;height:7px;border-radius:50%;background:radial-gradient(circle at 40% 40%,#f4f4f4,#c4c4c4)"></div>
 <div class="a" style="left:27px;top:221px;width:26px;height:18.5px;overflow:hidden;background-color:#fff;background-image:linear-gradient(45deg,#e2e2e2 25%,transparent 25%,transparent 75%,#e2e2e2 75%),linear-gradient(45deg,#e2e2e2 25%,transparent 25%,transparent 75%,#e2e2e2 75%);background-size:6px 6px;background-position:0 0,3px 3px"><span class="t" style="transform:scaleX(0.758);left:1px;top:1.5px;font-size:7px;line-height:8px;color:#f28c1e;font-weight:bold">Meoxik</span><span class="t" style="transform:scaleX(0.874);left:1px;top:9px;font-size:6.5px;line-height:8px;color:#f28c1e;font-weight:bold"># Hoidap</span></div>
 <span class="t" style="transform:scaleX(0.915);left:65.7px;top:224px;font-size:10px;line-height:14px;color:#f0f0f0">Meoxik</span>
 <div class="a" style="left:241px;top:155px;width:14px;height:122.5px;background:linear-gradient(90deg,#2b2a2a,#3b3a39 55%,#2f2e2e)"></div>
 <div class="a" style="left:241.5px;top:164px;width:13px;height:104px;border-radius:4px;background:linear-gradient(90deg,#5d5c5b,#706f6e 50%,#5d5c5b)"></div>
 <svg style="left:244px;top:155.5px" width="8" height="7" viewBox="0 0 8 7"><path d="M4 .8L7.5 6.2H.5z" fill="#c8c8c8"/></svg>
 <svg style="left:244px;top:270px" width="8" height="7" viewBox="0 0 8 7"><path d="M4 6.2L7.5 .8H.5z" fill="#c8c8c8"/></svg>
 <div class="a" style="left:4.4px;top:280.5px;width:17px;height:17px;border-radius:2.5px;background:#4b4a49"><svg width="17" height="17" viewBox="0 0 17 17"><path d="M4.5 3.5h5.5l2.5 2.5v7.5h-8z" fill="none" stroke="#f0f0f0" stroke-width="1.1"/></svg></div>
 <div class="a" style="left:24.5px;top:280.5px;width:17px;height:17px;border-radius:2.5px;background:#4b4a49"><svg width="17" height="17" viewBox="0 0 17 17"><path d="M4.5 3.5h5.5l2.5 2.5v7.5h-8z" fill="none" stroke="#f0f0f0" stroke-width="1.1"/><path d="M7.3 7.5h2.2v4.5H7.3zM7.3 9.7h2.2" fill="none" stroke="#f0f0f0" stroke-width=".9"/></svg></div>
 <div class="a" style="left:44.6px;top:280.5px;width:17px;height:17px;border-radius:2.5px;background:#4b4a49"><svg width="17" height="17" viewBox="0 0 17 17"><path d="M4.5 3.5h5.5l2.5 2.5v7.5h-8z" fill="none" stroke="#f0f0f0" stroke-width="1.1"/><path d="M7.5 8.5l1-1v4.5" fill="none" stroke="#f0f0f0" stroke-width=".9"/></svg></div>
 <div class="a" style="left:65.2px;top:280.5px;width:22px;height:17px;border-radius:2.5px;background:#4b4a49"><svg width="22" height="17" viewBox="0 0 22 17"><path d="M3.5 3h4.5l2.5 2.5v5.5h-7z" fill="none" stroke="#f0f0f0" stroke-width="1.1"/><path d="M9.5 9.5v5M7 12h5" stroke="#f0f0f0" stroke-width="1.3"/><path d="M14 7.5h5l-2.5 3z" fill="#f0f0f0"/></svg></div>
 <div class="a" style="left:90.3px;top:280.5px;width:17px;height:17px;border-radius:2.5px;background:#4b4a49"><svg width="17" height="17" viewBox="0 0 17 17"><path d="M3 5h4l1.2 1.5H14v7H3z" fill="#f0f0f0"/></svg></div>
 <div class="a" style="left:111.5px;top:284px;width:1px;height:10px;background:#555"></div>
 <div class="a" style="left:116px;top:280.5px;width:17px;height:17px;border-radius:2.5px;background:#4b4a49"><svg width="17" height="17" viewBox="0 0 17 17"><rect x="6" y="4" width="7" height="7" fill="none" stroke="#f0f0f0" stroke-width="1"/><rect x="4" y="6" width="7" height="7" fill="#4b4a49" stroke="#f0f0f0" stroke-width="1"/></svg></div>
 <div class="a" style="left:136px;top:280.5px;width:17px;height:17px;border-radius:2.5px;background:#222;border:1px solid #4a4a4a"><svg width="15" height="15" viewBox="0 0 15 15" style="left:0;top:0"><rect x="2.5" y="3" width="3.5" height="3.5" fill="none" stroke="#f0f0f0" stroke-width="1"/><rect x="2.5" y="9" width="3.5" height="3.5" fill="none" stroke="#f0f0f0" stroke-width="1"/><rect x="8.5" y="5.5" width="4" height="4" fill="#f0f0f0"/><path d="M6.5 4.7h1.5v6h-1.5" fill="none" stroke="#f0f0f0" stroke-width=".8"/></svg></div>
 <div class="a" style="left:156.5px;top:284px;width:1px;height:10px;background:#555"></div>
 <div class="a" style="left:161.2px;top:280.5px;width:17.5px;height:17px;border-radius:2.5px;background:#4b4a49"><svg width="17" height="17" viewBox="0 0 17 17"><path d="M4.5 6.5h8.5v7.5h-8.5z" fill="none" stroke="#f0f0f0" stroke-width="1.2"/><path d="M3.5 5h10.5M7 4h3.5M7 8v4.5M8.7 8v4.5M10.5 8v4.5" stroke="#f0f0f0" stroke-width="1.1"/></svg></div>
 <div class="hd" style="top:305.5px"><span class="t" style="transform:scaleX(0.860);left:98px;top:0">Brush Size</span><svg style="left:233.5px;top:4.2px" width="8" height="8" viewBox="0 0 10 10"><path d="M5 1.5H1.5v7h7V5" fill="none" stroke="#c8c8c8" stroke-width="1"/><path d="M5.5 4.5L9 1M6.5 .8h2.7v2.7" fill="none" stroke="#c8c8c8" stroke-width="1"/></svg><svg style="left:246.0px;top:4.7px" width="7" height="7" viewBox="0 0 9 9"><path d="M1.5 1.5l6 6M7.5 1.5l-6 6" stroke="#e0e0e0" stroke-width="2.300"/></svg></div>
 <div class="a" style="left:0;top:321.5px;width:256px;height:153.5px;background:#454443"></div>
 <div class="a" style="left:0.3px;top:321.8px;width:29px;height:36.2px;background:#555453"></div>
 <div class="a" style="left:14.70px;top:335.70px;width:0.6px;height:0.6px;border-radius:50%;background:#9a9a9a"></div>
 <span class="t" style="transform:scaleX(0.739);left:13.2px;top:348.5px;font-size:8.5px;line-height:10px;color:#f0f0f0">1</span>
 <div class="a" style="left:30.2px;top:321.8px;width:29px;height:36.2px;background:#555453"></div>
 <div class="a" style="left:44.55px;top:335.60px;width:0.8px;height:0.8px;border-radius:50%;background:#9a9a9a"></div>
 <span class="t" style="transform:scaleX(0.803);left:40.2px;top:348.5px;font-size:8.5px;line-height:10px;color:#f0f0f0">1.5</span>
 <div class="a" style="left:60.2px;top:321.8px;width:29px;height:36.2px;background:#555453"></div>
 <div class="a" style="left:74.30px;top:335.40px;width:1.2px;height:1.2px;border-radius:50%;background:#9a9a9a"></div>
 <span class="t" style="transform:scaleX(0.739);left:73.2px;top:348.5px;font-size:8.5px;line-height:10px;color:#f0f0f0">2</span>
 <div class="a" style="left:90.1px;top:321.8px;width:29px;height:36.2px;background:#555453"></div>
 <div class="a" style="left:103.95px;top:335.10px;width:1.8px;height:1.8px;border-radius:50%;background:#9a9a9a"></div>
 <span class="t" style="transform:scaleX(0.739);left:103.1px;top:348.5px;font-size:8.5px;line-height:10px;color:#f0f0f0">3</span>
 <div class="a" style="left:120.1px;top:321.8px;width:29px;height:36.2px;background:#555453"></div>
 <div class="a" style="left:133.50px;top:334.70px;width:2.6px;height:2.6px;border-radius:50%;background:#f2f2f2"></div>
 <span class="t" style="transform:scaleX(0.739);left:133.1px;top:348.5px;font-size:8.5px;line-height:10px;color:#f0f0f0">4</span>
 <div class="a" style="left:150.1px;top:321.8px;width:29px;height:36.2px;background:#555453"></div>
 <div class="a" style="left:163.05px;top:334.30px;width:3.4px;height:3.4px;border-radius:50%;background:#f2f2f2"></div>
 <span class="t" style="transform:scaleX(0.739);left:163.0px;top:348.5px;font-size:8.5px;line-height:10px;color:#f0f0f0">5</span>
 <div class="a" style="left:180.0px;top:321.8px;width:29px;height:36.2px;background:#555453"></div>
 <div class="a" style="left:192.20px;top:333.50px;width:5px;height:5px;border-radius:50%;background:#f2f2f2"></div>
 <span class="t" style="transform:scaleX(0.739);left:192.9px;top:348.5px;font-size:8.5px;line-height:10px;color:#f0f0f0">7</span>
 <div class="a" style="left:210.0px;top:321.8px;width:29px;height:36.2px;background:#555453"></div>
 <div class="a" style="left:221.15px;top:332.50px;width:7px;height:7px;border-radius:50%;background:#f2f2f2"></div>
 <span class="t" style="transform:scaleX(0.950);left:220.2px;top:348.5px;font-size:8.5px;line-height:10px;color:#f0f0f0">10</span>
 <div class="a" style="left:0.3px;top:359.0px;width:29px;height:36.2px;background:#555453"></div>
 <div class="a" style="left:10.50px;top:369.20px;width:9px;height:9px;border-radius:50%;background:#f2f2f2"></div>
 <span class="t" style="transform:scaleX(0.950);left:10.5px;top:386.7px;font-size:8.5px;line-height:10px;color:#f0f0f0">12</span>
 <div class="a" style="left:30.2px;top:359.0px;width:29px;height:36.2px;background:#555453"></div>
 <div class="a" style="left:39.45px;top:368.20px;width:11px;height:11px;border-radius:50%;background:#f2f2f2"></div>
 <span class="t" style="transform:scaleX(0.950);left:40.5px;top:386.7px;font-size:8.5px;line-height:10px;color:#f0f0f0">15</span>
 <div class="a" style="left:60.2px;top:359.0px;width:29px;height:36.2px;background:#555453"></div>
 <div class="a" style="left:67.40px;top:366.20px;width:15px;height:15px;border-radius:50%;background:#f2f2f2"></div>
 <span class="t" style="transform:scaleX(0.950);left:70.4px;top:386.7px;font-size:8.5px;line-height:10px;color:#f0f0f0">20</span>
 <div class="a" style="left:90.1px;top:359.0px;width:29px;height:36.2px;background:#555453"></div>
 <div class="a" style="left:95.85px;top:364.70px;width:18px;height:18px;border-radius:50%;background:#f2f2f2"></div>
 <span class="t" style="transform:scaleX(0.950);left:100.3px;top:386.7px;font-size:8.5px;line-height:10px;color:#f0f0f0">25</span>
 <div class="a" style="left:120.1px;top:359.0px;width:29px;height:36.2px;background:#555453"></div>
 <div class="a" style="left:125.80px;top:364.70px;width:18px;height:18px;border-radius:50%;background:#f2f2f2"></div>
 <span class="t" style="transform:scaleX(0.950);left:130.3px;top:386.7px;font-size:8.5px;line-height:10px;color:#f0f0f0">30</span>
 <div class="a" style="left:150.1px;top:359.0px;width:29px;height:36.2px;background:#555453"></div>
 <div class="a" style="left:155.75px;top:364.70px;width:18px;height:18px;border-radius:50%;background:#f2f2f2"></div>
 <span class="t" style="transform:scaleX(0.950);left:160.2px;top:386.7px;font-size:8.5px;line-height:10px;color:#f0f0f0">40</span>
 <div class="a" style="left:180.0px;top:359.0px;width:29px;height:36.2px;background:#555453"></div>
 <div class="a" style="left:185.70px;top:364.70px;width:18px;height:18px;border-radius:50%;background:#f2f2f2"></div>
 <span class="t" style="transform:scaleX(0.950);left:190.2px;top:386.7px;font-size:8.5px;line-height:10px;color:#f0f0f0">50</span>
 <div class="a" style="left:210.0px;top:359.0px;width:29px;height:36.2px;background:#555453"></div>
 <div class="a" style="left:215.65px;top:364.70px;width:18px;height:18px;border-radius:50%;background:#f2f2f2"></div>
 <span class="t" style="transform:scaleX(0.950);left:220.2px;top:386.7px;font-size:8.5px;line-height:10px;color:#f0f0f0">70</span>
 <div class="a" style="left:0.3px;top:396.2px;width:29px;height:36.2px;background:#555453"></div>
 <div class="a" style="left:6.00px;top:401.90px;width:18px;height:18px;border-radius:50%;background:#f2f2f2"></div>
 <span class="t" style="transform:scaleX(1.022);left:7.8px;top:423.9px;font-size:8.5px;line-height:10px;color:#f0f0f0">100</span>
 <div class="a" style="left:30.2px;top:396.2px;width:29px;height:36.2px;background:#555453"></div>
 <div class="a" style="left:35.95px;top:401.90px;width:18px;height:18px;border-radius:50%;background:#f2f2f2"></div>
 <span class="t" style="transform:scaleX(1.022);left:37.7px;top:423.9px;font-size:8.5px;line-height:10px;color:#f0f0f0">150</span>
 <div class="a" style="left:60.2px;top:396.2px;width:29px;height:36.2px;background:#555453"></div>
 <div class="a" style="left:65.90px;top:401.90px;width:18px;height:18px;border-radius:50%;background:#f2f2f2"></div>
 <span class="t" style="transform:scaleX(1.022);left:67.7px;top:423.9px;font-size:8.5px;line-height:10px;color:#f0f0f0">200</span>
 <div class="a" style="left:90.1px;top:396.2px;width:29px;height:36.2px;background:#555453"></div>
 <div class="a" style="left:95.85px;top:401.90px;width:18px;height:18px;border-radius:50%;background:#f2f2f2"></div>
 <span class="t" style="transform:scaleX(1.022);left:97.6px;top:423.9px;font-size:8.5px;line-height:10px;color:#f0f0f0">300</span>
 <div class="a" style="left:120.1px;top:396.2px;width:29px;height:36.2px;background:#555453"></div>
 <div class="a" style="left:125.80px;top:401.90px;width:18px;height:18px;border-radius:50%;background:#f2f2f2"></div>
 <span class="t" style="transform:scaleX(1.022);left:127.6px;top:423.9px;font-size:8.5px;line-height:10px;color:#f0f0f0">400</span>
 <div class="a" style="left:150.1px;top:396.2px;width:29px;height:36.2px;background:#555453"></div>
 <div class="a" style="left:155.75px;top:401.90px;width:18px;height:18px;border-radius:50%;background:#f2f2f2"></div>
 <span class="t" style="transform:scaleX(1.022);left:157.5px;top:423.9px;font-size:8.5px;line-height:10px;color:#f0f0f0">500</span>
 <div class="a" style="left:180.0px;top:396.2px;width:29px;height:36.2px;background:#555453"></div>
 <div class="a" style="left:185.70px;top:401.90px;width:18px;height:18px;border-radius:50%;background:#f2f2f2"></div>
 <span class="t" style="transform:scaleX(1.022);left:187.4px;top:423.9px;font-size:8.5px;line-height:10px;color:#f0f0f0">700</span>
 <div class="a" style="left:210.0px;top:396.2px;width:29px;height:36.2px;background:#555453"></div>
 <div class="a" style="left:215.65px;top:401.90px;width:18px;height:18px;border-radius:50%;background:#f2f2f2"></div>
 <span class="t" style="transform:scaleX(1.004);left:215.2px;top:423.9px;font-size:8.5px;line-height:10px;color:#f0f0f0">1000</span>
 <div class="a" style="left:241px;top:321.5px;width:14px;height:153.5px;background:linear-gradient(90deg,#2b2a2a,#3b3a39 55%,#2f2e2e)"></div>
 <div class="a" style="left:241.5px;top:331px;width:13px;height:134px;border-radius:4px;background:linear-gradient(90deg,#5d5c5b,#706f6e 50%,#5d5c5b)"></div>
 <svg style="left:244px;top:323px" width="8" height="7" viewBox="0 0 8 7"><path d="M4 .8L7.5 6.2H.5z" fill="#c8c8c8"/></svg>
 <svg style="left:244px;top:466.5px" width="8" height="7" viewBox="0 0 8 7"><path d="M4 6.2L7.5 .8H.5z" fill="#c8c8c8"/></svg>
</div>

<div class="a" id="status">
 <span class="t" style="transform:scaleX(0.865);left:4.2px;top:0">1600 * 1200 pixel</span>
 <span class="t" style="transform:scaleX(0.916);left:75.4px;top:0">(11.6 * 8.7cm)</span>
 <span class="t" style="transform:scaleX(0.930);left:136px;top:0">350 dpi</span>
 <span class="t" style="transform:scaleX(0.900);left:171.5px;top:0">48 %</span>
 <span class="t" style="transform:scaleX(0.833);left:198.5px;top:0">( 963, 616 )</span>
 <span class="t" style="transform:scaleX(0.960);left:246.5px;top:0">Move Horizontally/Perpendicularly by holding down Shift</span>
</div>

<div class="a" id="task">
 <div class="a" style="left:0;top:0;width:1024px;height:29px;background:linear-gradient(90deg,#0a0d2a 0,#0b0f30 25%,#0b0e2e 45%,#090b24 60%,#0a0d2a 75%,#0f1338 90%,#0c1030 100%)"></div>
 <div class="a" style="left:0;top:0;width:1024px;height:1px;background:#4a4e66"></div>
 <div class="a" style="left:380px;top:4px;width:220px;height:30px;border-radius:50%;background:#14205a;filter:blur(14px);opacity:.45"></div>
 <!-- start orb -->
 <div class="a" style="left:6px;top:0px;width:28px;height:28px;border-radius:50%;background:radial-gradient(circle at 50% 30%,#9fd0f0 0,#3f86c8 40%,#1a4a90 70%,#0a2a60 100%);box-shadow:0 0 3px 1px rgba(140,190,240,.6)"></div>
 <svg style="left:11.5px;top:5px" width="17" height="17" viewBox="0 0 17 17"><path d="M1.5 3.5c2-1.2 4-1.2 6 0v5c-2-1.2-4-1.2-6 0z" fill="#f2672e" transform="skewY(-4) translate(0,1)"/><path d="M9 3.2c2 1.2 4 1.2 6 0v5c-2 1.2-4 1.2-6 0z" fill="#8cc63f" transform="skewY(-4) translate(0,1.8)"/><path d="M1.5 9.5c2-1.2 4-1.2 6 0v5c-2-1.2-4-1.2-6 0z" fill="#3aa0e8" transform="skewY(-4) translate(0,1)"/><path d="M9 9.2c2 1.2 4 1.2 6 0v5c-2 1.2-4 1.2-6 0z" fill="#f8c828" transform="skewY(-4) translate(0,1.8)"/></svg>
 <!-- VS icon -->
 <svg style="left:68px;top:5px" width="22" height="18" viewBox="0 0 22 18"><path d="M1 1l11 8L1 17z" fill="#8a4fd8"/><path d="M21 1L10 9l11 8z" fill="#cdb4f5"/><path d="M8 6l4 3-4 3z" fill="#6a30b8"/></svg>
 <!-- IE -->
 <svg style="left:112px;top:2px" width="27" height="25" viewBox="0 0 27 25"><path d="M13.5 5a7.5 7.5 0 1 0 7 10h-4.3a3.6 3.6 0 0 1-6.3-1.5h11.1A7.5 7.5 0 0 0 13.5 5zm-3.5 6a3.6 3.6 0 0 1 7 0z" fill="#2f9ce0"/><path d="M22.5 4.5c2.5-3-2-4-8-.5C7 8 1.5 16 3.5 20.5c1.2 2.5 5 1.5 8-.5-3 1-5.5 1-6-1C4.5 15 10 8.5 15.5 5.5c3.5-2 7-2.5 7-1z" fill="#f0c030"/></svg>
 <!-- task buttons -->
 <div class="a" style="left:150.5px;top:.5px;width:43px;height:28px;border:1px solid #6a6c84;border-radius:2px;background:linear-gradient(#9898ac 0,#5c5e78 30%,#2a2c4a 55%,#1a1c3c 100%)"></div>
 <div class="a" style="left:196.5px;top:.5px;width:43.5px;height:28px;border:1px solid #6a6c84;border-radius:2px;background:linear-gradient(#9898ac 0,#5c5e78 30%,#2a2c4a 55%,#1a1c3c 100%)"></div>
 <div class="a" style="left:243px;top:.5px;width:43px;height:28px;border:1px solid #b8dce8;border-radius:2px;background:linear-gradient(#e8f2f6 0,#bcdce6 35%,#78b8cc 60%,#5aa8c4 100%)"></div>
 <div class="a" style="left:289.5px;top:.5px;width:43.5px;height:28px;border:1px solid #6a6c84;border-radius:2px;background:linear-gradient(#9898ac 0,#5c5e78 30%,#2a2c4a 55%,#1a1c3c 100%)"></div>
 <!-- coccoc -->
 <svg style="left:159px;top:1px" width="26" height="26" viewBox="0 0 26 26"><circle cx="12.5" cy="13.5" r="11.5" fill="#6ab04c" stroke="#eaf5e4" stroke-width="1"/><circle cx="12" cy="13.5" r="6" fill="none" stroke="#fff" stroke-width="2.2"/><circle cx="12" cy="13.5" r="2.6" fill="#8cc870"/><path d="M13.5 12L23 1l2 5-6 7z" fill="#fff"/><path d="M15.5 8l-.5-5M18 9.5l3.5-6M19.5 11.5l5-2.5" stroke="#f07a28" stroke-width="1.6"/></svg>
 <!-- chrome -->
 <svg style="left:206px;top:2px" width="24" height="24" viewBox="0 0 24 24"><circle cx="12" cy="12" r="11.5" fill="#e94235"/><path d="M12 12L2 6.3A11.5 11.5 0 0 0 7 22.3z" fill="#34a853"/><path d="M12 12L7 22.3A11.5 11.5 0 0 0 22 6.3H12z" fill="#fbbc05"/><path d="M12 12l10-5.7A11.5 11.5 0 0 0 2 6.3z" fill="#e94235"/><circle cx="12" cy="12" r="5.3" fill="#fff"/><circle cx="12" cy="12" r="4.2" fill="#4285f4"/></svg>
 <!-- medibang -->
 <div class="a" style="left:253.5px;top:2.2px;width:23.5px;height:23.5px;border-radius:5px;background:#fff"></div>
 <svg style="left:258px;top:5px" width="15" height="18" viewBox="0 0 15 18"><defs><linearGradient id="mb" x1="0" y1="0" x2="1" y2="1"><stop offset="0" stop-color="#f03a30"/><stop offset=".35" stop-color="#f5a030"/><stop offset=".55" stop-color="#3ac0a0"/><stop offset="1" stop-color="#1a9ad0"/></linearGradient></defs><path d="M8 1c4 2 6.5 6 6 10s-3.5 6.5-7 6-6-3.5-5.5-7.5S4.5 2.5 8 1z" fill="url(#mb)"/><path d="M8 1c-3 2-5 5-5.5 8 2-3 4.5-4.5 7-4.5C9.5 3 9 2 8 1z" fill="#e8342c"/></svg>
 <!-- paint -->
 <svg style="left:298px;top:1px" width="28" height="27" viewBox="0 0 28 27"><path d="M3 15c0-5 5-9 11-9s9 3 9 6.5-3 4-5 4-2 1.5-1 3-1 3-4 3C7 22.5 3 20 3 15z" fill="#e8eef4" stroke="#9aa4b0" stroke-width=".6"/><circle cx="8" cy="12.5" r="1.8" fill="#e8483c"/><circle cx="12.5" cy="9.5" r="1.8" fill="#58b848"/><circle cx="17.5" cy="9.5" r="1.8" fill="#e8c838"/><circle cx="7.5" cy="17.5" r="1.8" fill="#4888d8"/><circle cx="12.5" cy="16" r="1.6" fill="#444"/><path d="M24.5 1.5L16 22" stroke="#e8903a" stroke-width="2"/><path d="M24.8 1l-1.8 4.5" stroke="#c86820" stroke-width="2.4"/></svg>
 <!-- tray -->
 <div class="a" style="left:908px;top:3px;width:6px;height:24px;opacity:.35;background-image:radial-gradient(#8890b0 .6px,transparent .7px);background-size:2px 2px"></div>
 <span class="t" style="transform:scaleX(0.871);left:922.8px;top:6px;font-size:9.5px;line-height:13px;color:#e4e4ec">EN</span>
 <svg style="left:946.5px;top:13px" width="6" height="4" viewBox="0 0 6 4"><path d="M3 .3L5.8 3.5H.2z" fill="#fff"/></svg>
 <span class="t" style="transform:scaleX(0.876);left:968.3px;top:0;font-size:9.5px;line-height:13px;color:#fff">3:50 PM</span>
 <span class="t" style="transform:scaleX(0.887);left:964px;top:14px;font-size:9.5px;line-height:13px;color:#fff">7/18/2021</span>
 <div class="a" style="left:1013.5px;top:1px;width:11px;height:28px;border-left:1px solid #6a6c80;background:linear-gradient(#b4b4c0 0,#5a5c70 25%,#1a1c34 55%,#0c0e24 100%)"></div>
</div>

</body></html>
